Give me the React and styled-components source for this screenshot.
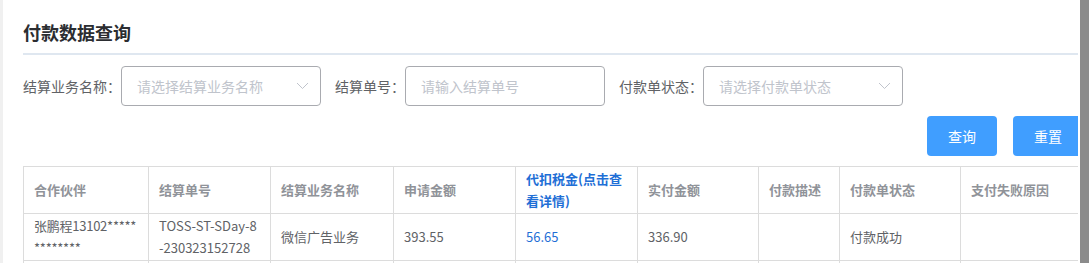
import React from "react";
import styled, { createGlobalStyle } from "styled-components";

const Global = createGlobalStyle`
  html, body {
    margin: 0;
    padding: 0;
    background: #fff;
    overflow: hidden;
  }
  body {
    font-family: "Noto Sans CJK SC", "Noto Sans", sans-serif;
  }
`;

const Shell = styled.div`
  display: flex;
  height: 263px;
  overflow: hidden;
`;

const Gutter = styled.div`
  width: 3px;
  flex-shrink: 0;
  background: #f0f0f0;
`;

const Main = styled.div`
  width: 1075px;
  flex-shrink: 0;
  overflow: hidden;
  padding-left: 20px;
  box-sizing: border-box;
`;

const Inner = styled.div`
  width: 1060px;
`;

const ScrollTrack = styled.div`
  width: 11px;
  flex-shrink: 0;
  display: flex;
  justify-content: flex-end;
  background: #fff;
`;

const ScrollThumb = styled.div`
  width: 9px;
  background: #8b8b8b;
`;

const Title = styled.h2`
  margin: 0;
  padding-top: 20px;
  font-size: 18px;
  line-height: 24px;
  font-weight: bold;
  color: #2b2d31;
`;

const Divider = styled.div`
  margin-top: 9px;
  height: 2px;
  background: #dfe7f0;
`;

const FilterRow = styled.div`
  margin-top: 11px;
  display: flex;
  align-items: center;
  gap: 14px;
`;

const Field = styled.div`
  display: flex;
  align-items: center;
`;

const Label = styled.span`
  font-size: 14px;
  color: #606266;
  white-space: nowrap;
`;

const Control = styled.div`
  width: 200px;
  height: 40px;
  box-sizing: border-box;
  border: 1px solid #a9abb0;
  border-radius: 4px;
  display: flex;
  align-items: center;
  justify-content: space-between;
  padding: 0 11px 0 15px;
  font-size: 14px;
  color: #c0c4cc;
`;

const Chevron = () => (
  <svg width="13" height="8" viewBox="0 0 13 8">
    <polyline points="1,1 6.5,6.5 12,1" fill="none" stroke="#c0c4cc" strokeWidth="1" />
  </svg>
);

const Actions = styled.div`
  margin-top: 10px;
  display: flex;
  justify-content: flex-end;
  gap: 16px;
`;

const Button = styled.button`
  width: 70px;
  height: 40px;
  border: none;
  border-radius: 4px;
  background: #409eff;
  color: #fff;
  font-family: inherit;
  font-size: 14px;
  padding: 0;
`;

const Table = styled.table`
  margin-top: 10px;
  width: 1060px;
  table-layout: fixed;
  border-collapse: collapse;
  font-size: 13px;
`;

const Th = styled.th`
  height: 46px;
  padding: 0 10px;
  border: 1px solid #dcdcdc;
  text-align: left;
  vertical-align: middle;
  font-weight: bold;
  line-height: 22px;
  color: ${(p) => (p.link ? "#1f6fd6" : "#909399")};
`;

const Td = styled.td`
  height: 46px;
  padding: 0 10px;
  border: 1px solid #dcdcdc;
  vertical-align: middle;
  line-height: 22px;
  word-break: break-all;
  letter-spacing: ${(p) => (p.tight ? "-0.25px" : "normal")};
  color: ${(p) => (p.link ? "#1f6fd6" : "#606266")};
`;

const columns = [
  { title: "合作伙伴", width: 125, tight: true },
  { title: "结算单号", width: 122 },
  { title: "结算业务名称", width: 123 },
  { title: "申请金额", width: 122 },
  { title: "代扣税金(点击查看详情)", width: 122, link: true },
  { title: "实付金额", width: 121 },
  { title: "付款描述", width: 81 },
  { title: "付款单状态", width: 121 },
  { title: "支付失败原因", width: 123 },
];

const rows = [
  [
    "张鹏程13102*************",
    "TOSS-ST-SDay-8-230323152728",
    "微信广告业务",
    "393.55",
    "56.65",
    "336.90",
    "",
    "付款成功",
    "",
  ],
  ["", "", "", "", "", "", "", "", ""],
];

export default function App() {
  return (
    <>
      <Global />
      <Shell>
        <Gutter />
        <Main>
          <Inner>
            <Title>付款数据查询</Title>
            <Divider />
            <FilterRow>
              <Field>
                <Label>结算业务名称：</Label>
                <Control>
                  请选择结算业务名称
                  <Chevron />
                </Control>
              </Field>
              <Field>
                <Label>结算单号：</Label>
                <Control>请输入结算单号</Control>
              </Field>
              <Field>
                <Label>付款单状态：</Label>
                <Control>
                  请选择付款单状态
                  <Chevron />
                </Control>
              </Field>
            </FilterRow>
            <Actions>
              <Button>查询</Button>
              <Button>重置</Button>
            </Actions>
            <Table>
              <colgroup>
                {columns.map((c) => (
                  <col key={c.title} style={{ width: c.width }} />
                ))}
              </colgroup>
              <thead>
                <tr>
                  {columns.map((c) => (
                    <Th key={c.title} link={c.link}>
                      {c.title}
                    </Th>
                  ))}
                </tr>
              </thead>
              <tbody>
                {rows.map((r, i) => (
                  <tr key={i}>
                    {r.map((v, j) => (
                      <Td key={j} link={columns[j].link} tight={columns[j].tight}>
                        {v}
                      </Td>
                    ))}
                  </tr>
                ))}
              </tbody>
            </Table>
          </Inner>
        </Main>
        <ScrollTrack>
          <ScrollThumb />
        </ScrollTrack>
      </Shell>
    </>
  );
}
